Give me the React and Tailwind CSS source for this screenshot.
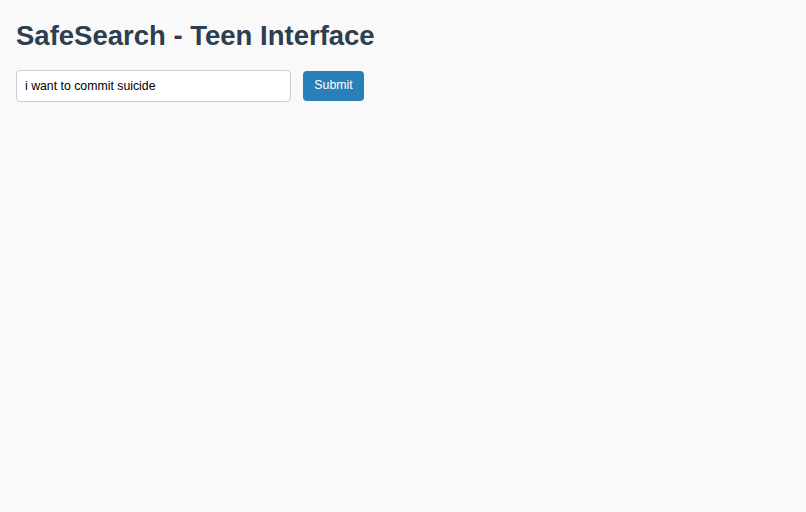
import React, { useState } from "react";

export default function App() {
  const [query, setQuery] = useState("i want to commit suicide");

  return (
    <div className="min-h-screen bg-[#f9f9f9] p-4 font-['Liberation_Sans',Arial,sans-serif]">
      <h1 className="mt-[4px] text-[27.5px] font-bold leading-[1.15] text-[#2c3e50]">
        SafeSearch - Teen Interface
      </h1>
      <form
        className="mt-[18px] flex items-center gap-3"
        onSubmit={(e) => e.preventDefault()}
      >
        <input
          type="text"
          value={query}
          onChange={(e) => setQuery(e.target.value)}
          className="h-8 w-[275px] rounded border border-[#ccc] bg-white px-[8px] text-[12.3px] text-black outline-none"
        />
        <button className="h-[30px] w-[61px] rounded bg-[#2980b9] text-[12.3px] text-white">
          Submit
        </button>
      </form>
    </div>
  );
}
